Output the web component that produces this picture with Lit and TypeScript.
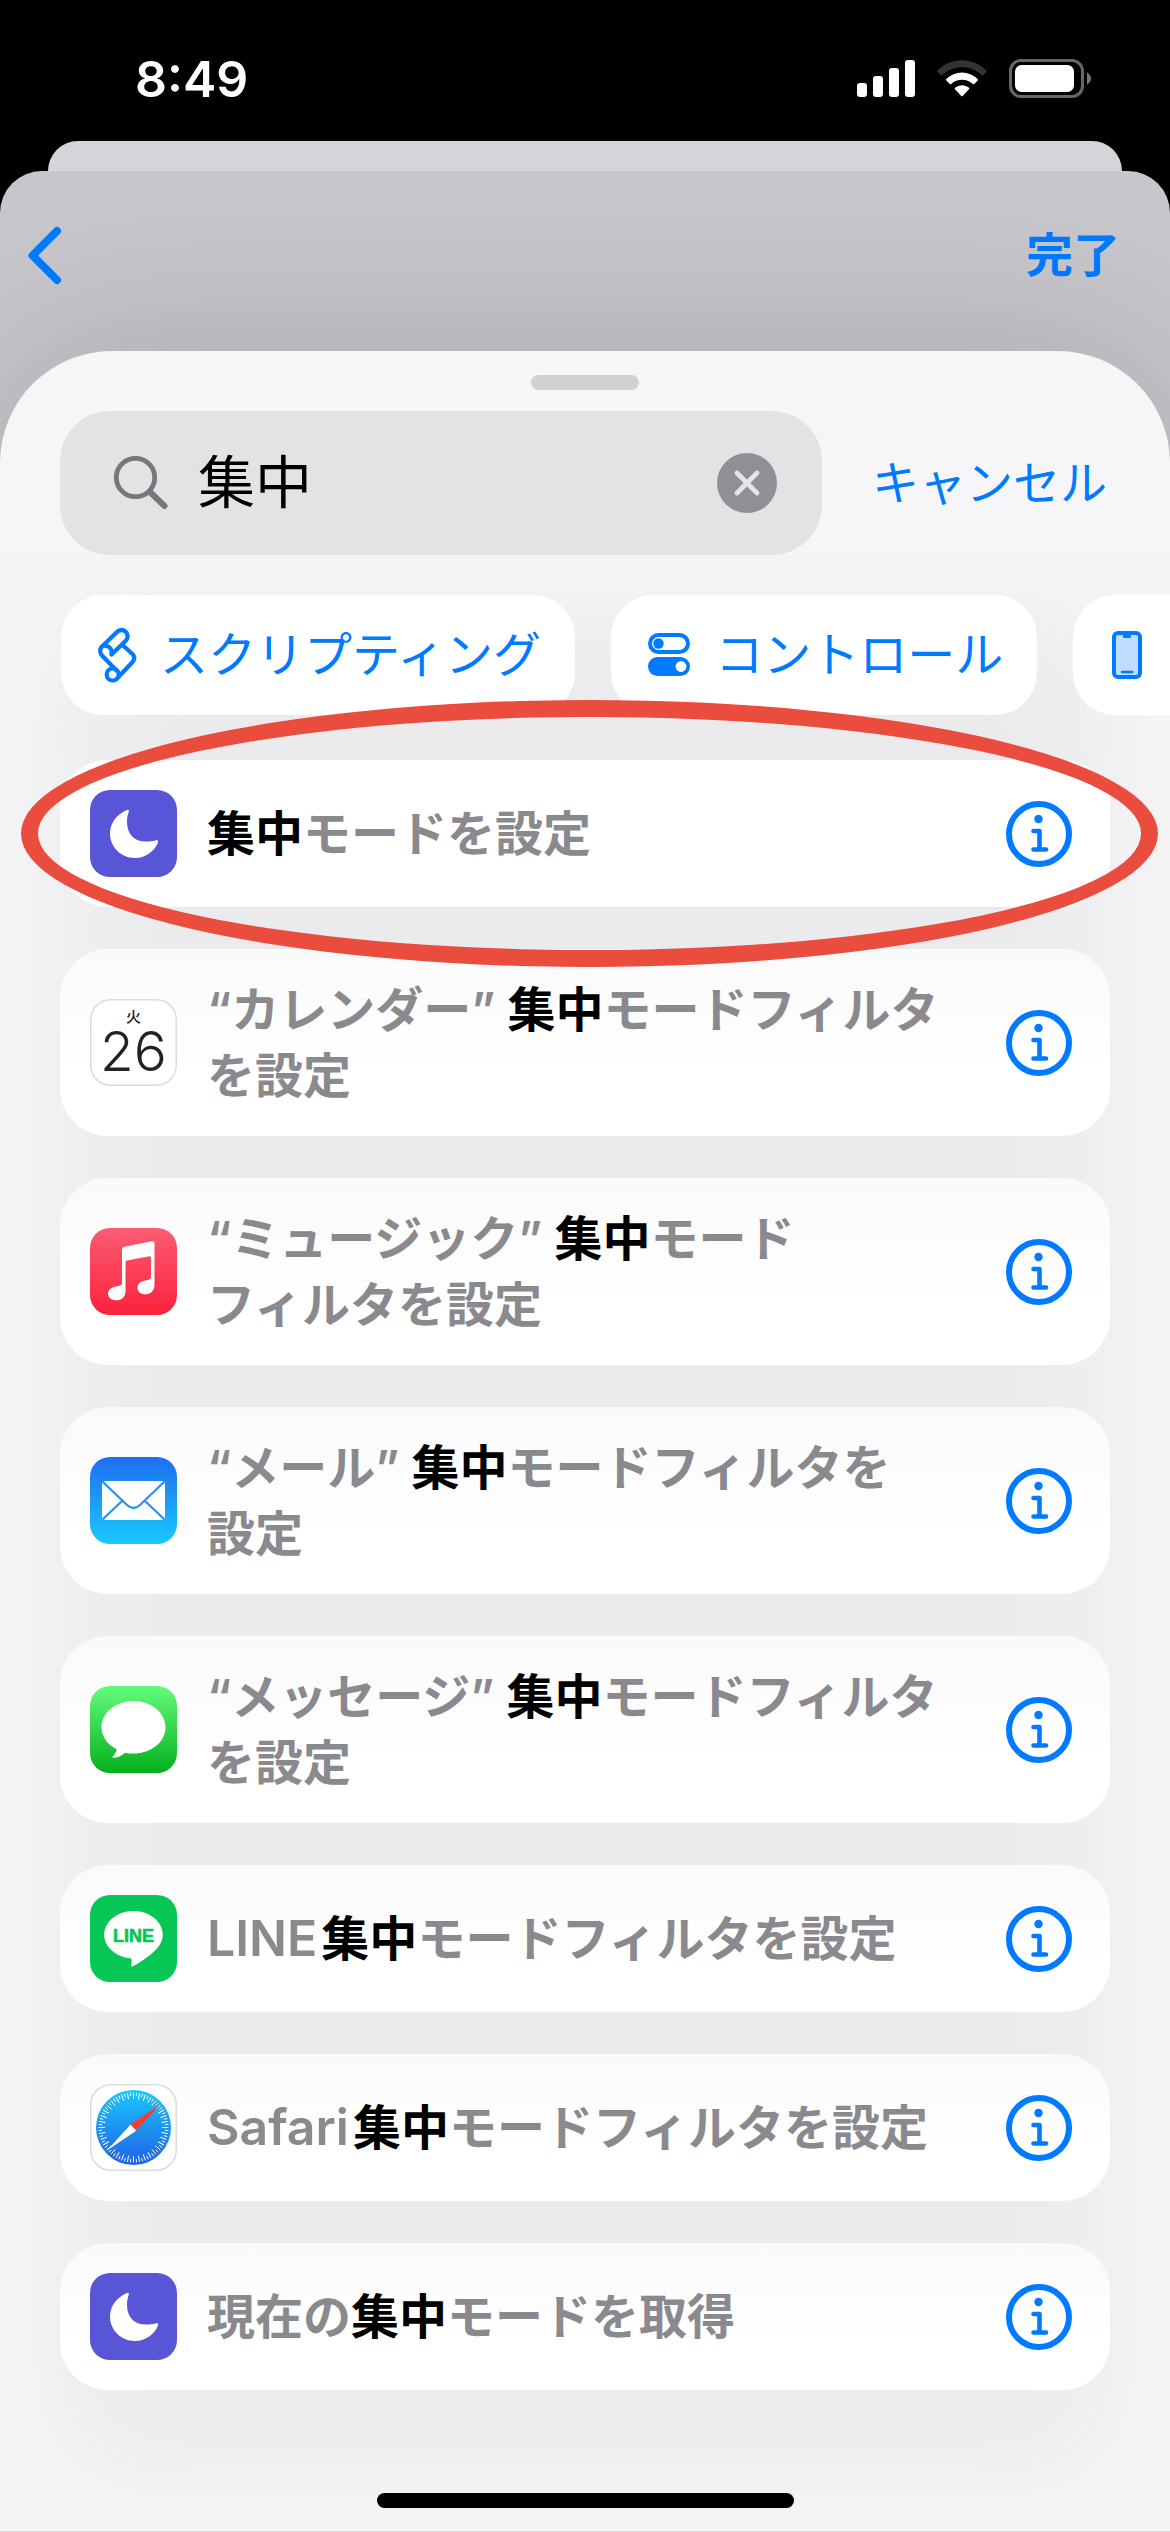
import { LitElement, html, svg, css } from "lit";
import { customElement, property } from "lit/decorators.js";

type Segment = { text: string; kind?: "match" | "latin" | "break" };
type Action = { app: string; segments: Segment[]; circled?: boolean };

const m = (text: string): Segment => ({ text, kind: "match" });
const l = (text: string): Segment => ({ text, kind: "latin" });
const t = (text: string): Segment => ({ text });
const br: Segment = { text: "", kind: "break" };

const ACTIONS: Action[] = [
  { app: "focus", segments: [m("集中"), t("モードを設定")], circled: true },
  { app: "calendar", segments: [t("“カレンダー” "), m("集中"), t("モードフィルタ"), br, t("を設定")] },
  { app: "music", segments: [t("“ミュージック” "), m("集中"), t("モード"), br, t("フィルタを設定")] },
  { app: "mail", segments: [t("“メール” "), m("集中"), t("モードフィルタを"), br, t("設定")] },
  { app: "messages", segments: [t("“メッセージ” "), m("集中"), t("モードフィルタ"), br, t("を設定")] },
  { app: "line", segments: [l("LINE"), m("集中"), t("モードフィルタを設定")] },
  { app: "safari", segments: [l("Safari"), m("集中"), t("モードフィルタを設定")] },
  { app: "focus", segments: [t("現在の"), m("集中"), t("モードを取得")] },
];

const CHIPS = [
  { icon: "script", label: "スクリプティング" },
  { icon: "controls", label: "コントロール" },
  { icon: "device", label: "デバイス" },
];

const FONT = css`"Inter", "Noto Sans CJK JP", sans-serif`;

/* Rounded app tile with the artwork of one app. */
@customElement("app-icon")
class AppIcon extends LitElement {
  @property() name = "";

  static styles = css`
    :host { display: block; flex: none; width: 87px; height: 87px; }
    svg { display: block; width: 100%; height: 100%; }
    .line-word { font: 700 18px "Liberation Sans", sans-serif; fill: #06c755; stroke: #06c755; }
    .weekday { font: 500 15px "Noto Sans CJK JP", sans-serif; fill: #222; }
    .day { font: 300 55px ${FONT}; fill: #222; }
  `;

  private art() {
    switch (this.name) {
      case "focus":
        return svg`<rect width="87" height="87" rx="20" fill="#5856d6"/>
          <path fill="#fff" d="M37 20C27 24 20 33 20 43.500C20 57 31 68 45 68C55 68 64 62 68 52.500C68.600 50.800 67.500 49.600 66 50.200C63 51.200 60 51.600 56 51.600C44 51.600 37 44 37 32C37 28 37.500 25 38.700 22C39.300 20.400 38.500 19.400 37 20Z"/>`;
      case "calendar":
        return svg`<rect x=".75" y=".75" width="85.500" height="85.500" rx="20" fill="#fff" stroke="#dcdcde" stroke-width="1.500"/>
          <text class="weekday" x="43.500" y="23" text-anchor="middle">火</text>
          <text class="day" x="43.500" y="72" text-anchor="middle">26</text>`;
      case "music":
        return svg`<defs><linearGradient id="g" x2="0" y2="1"><stop stop-color="#fb5c74"/><stop offset="1" stop-color="#fa233b"/></linearGradient></defs>
          <rect width="87" height="87" rx="20" fill="url(#g)"/>
          <path fill="#fff" d="M32 21.500Q32 19.200 34.300 18.700L62 13.200Q64.500 12.800 64.500 15.200V57C64.500 63 60 66.300 55 66.300C50.500 66.300 47.500 63.500 47.500 60C47.500 56 50.500 53.500 55 52.500L58.500 51.800Q61 51.300 61 48.500V29.800Q61 28 59.300 28.300L37 32.500Q35.500 32.800 35.500 34.300V63C35.500 69 31.500 72.300 26.300 72.300C21.500 72.300 18 69.500 18 66C18 62 21 59.500 25.500 58.500L29 57.800Q32 57.200 32 54.500Z"/>`;
      case "mail":
        return svg`<defs><linearGradient id="g" x2="0" y2="1"><stop stop-color="#1e6ef0"/><stop offset="1" stop-color="#1ac8fc"/></linearGradient></defs>
          <rect width="87" height="87" rx="20" fill="url(#g)"/>
          <rect x="12" y="24" width="63" height="39" rx="4" fill="#fff"/>
          <path d="M13 25L37 48Q43.500 54 50 48L74 25M13 62L32 44M74 62L55 44" fill="none" stroke="#2292f6" stroke-width="2.200"/>`;
      case "messages":
        return svg`<defs><linearGradient id="g" x2="0" y2="1"><stop stop-color="#64fb7c"/><stop offset="1" stop-color="#04b01c"/></linearGradient></defs>
          <rect width="87" height="87" rx="20" fill="url(#g)"/>
          <path fill="#fff" d="M43.500 15C61.500 15 75.500 26.800 75.500 41.300S61.500 67.600 43.500 67.600C40.500 67.600 37.800 67.300 35 66.700C32 69.600 27.500 71.800 23.200 71.800C22.300 71.800 22.200 70.900 22.800 70.300C25 68.300 26.300 66 26.600 63.300C17.500 58.600 11.500 50.600 11.500 41.300C11.500 26.800 25.500 15 43.500 15Z"/>`;
      case "line":
        return svg`<rect width="87" height="87" rx="20" fill="#06c755"/>
          <path fill="#fff" d="M43.500 16C59.700 16 72.800 26.600 72.800 39.700C72.800 45 70.600 49.700 66.300 54.200C60 61 47.600 69.300 42.800 71.300C40.800 72 41 70.500 41.200 69.500C41.600 67 42.500 63.600 40 63.200C25.500 61.600 14.200 51.600 14.200 39.700C14.200 26.600 27.300 16 43.500 16Z"/>
          <text class="line-word" x="43.500" y="47" text-anchor="middle" stroke-width=".6">LINE</text>`;
      default: {
        const ticks = Array.from({ length: 72 }, (_, i) => i);
        return svg`<defs><linearGradient id="g" x2="0" y2="1"><stop stop-color="#19c8fa"/><stop offset="1" stop-color="#1e62e6"/></linearGradient></defs>
          <rect x=".75" y=".75" width="85.500" height="85.500" rx="20" fill="#fff" stroke="#dcdcde" stroke-width="1.500"/>
          <circle cx="43.500" cy="43.500" r="37.500" fill="url(#g)"/>
          ${ticks.map((i) => svg`<path d="M43.500 8.500v${i % 2 ? 3.5 : 6.5}" stroke="#fff" stroke-width=".9" transform="rotate(${i * 5} 43.500 43.500)"/>`)}
          <path fill="#fff" d="M17 66.500L40.500 40.500L46.500 46.500Z"/>
          <path fill="#fb3b30" d="M70 20.500L40.500 40.500L46.500 46.500Z"/>`;
      }
    }
  }

  render() {
    return html`<svg viewBox="0 0 87 87" aria-hidden="true">${this.art()}</svg>`;
  }
}

/* One search result: app tile, title with the match in black, info button. */
@customElement("action-row")
class ActionRow extends LitElement {
  @property({ attribute: false }) action!: Action;

  static styles = css`
    :host { display: block; position: relative; }
    .card {
      display: flex; align-items: center; gap: 30px; box-sizing: border-box;
      min-height: 147px; padding: 28px 38px 27px 30px; border-radius: 48px;
      background: linear-gradient(#fafafa, #fff 70%);
    }
    .card.circled { background: #fff; }
    .title { flex: 1; margin: 0; font: 600 48px/66px ${FONT}; color: #8a8a8e; white-space: nowrap; }
    .match { font-weight: inherit; background: none; color: #000; }
    .latin { font-size: 50px; line-height: 1; margin-right: 4px; }
    .info { flex: none; padding: 0; border: 0; background: none; display: block; }
    .info svg { display: block; width: 66px; height: 66px; }
    .ring {
      position: absolute; z-index: 1; top: -60px; bottom: -60px; left: -39px; right: -48px;
      border: 17px solid #ea4c3e; border-radius: 50%; pointer-events: none;
    }
    .tile { margin: -28px 0 -27px; }
  `;

  private segment(s: Segment) {
    switch (s.kind) {
      case "break": return html`<br />`;
      case "match": return html`<mark class="match">${s.text}</mark>`;
      case "latin": return html`<span class="latin">${s.text}</span>`;
      default: return s.text;
    }
  }

  render() {
    const { app, segments, circled } = this.action;
    return html`
      <div class="card ${circled ? "circled" : ""}">
        <app-icon class="tile" name=${app}></app-icon>
        <p class="title">${segments.map((s) => this.segment(s))}</p>
        <button class="info" aria-label="情報">
          <svg viewBox="0 0 66 66" fill="none" stroke="#007aff" stroke-linecap="round" stroke-linejoin="round">
            <circle cx="33" cy="33" r="30" stroke-width="6"/>
            <circle cx="32.500" cy="18" r="4.200" fill="#007aff" stroke="none"/>
            <path d="M27.500 30H33.500V48.500M27.500 48.500H40" stroke-width="4.600"/>
          </svg>
        </button>
      </div>
      ${circled ? html`<div class="ring"></div>` : ""}`;
  }
}

@customElement("app-root")
class AppRoot extends LitElement {
  static styles = css`
    :host { display: block; }
    button { font: inherit; color: inherit; border: 0; padding: 0; background: none; }
    svg { display: block; flex: none; }
    .screen {
      display: flex; flex-direction: column; min-height: 100vh; box-sizing: border-box;
      background: #000; font: 400 48px/60px ${FONT}; color: #007aff; overflow: hidden;
    }
    .status {
      display: flex; align-items: center; justify-content: space-between; box-sizing: border-box;
      height: 141px; padding: 16px 78px 0 135px;
    }
    .time { font-size: 50px; font-weight: 600; color: #fff; }
    .indicators { display: flex; align-items: center; gap: 22px; }
    .back-sheet { height: 30px; margin: 0 48px; border-radius: 32px 32px 0 0; background: #d5d4d9; }
    .nav-sheet {
      flex: 1; display: flex; flex-direction: column; overflow: hidden;
      border-radius: 42px 42px 0 0; background: #c7c6cb;
    }
    .nav {
      display: flex; align-items: center; justify-content: space-between; box-sizing: border-box;
      height: 180px; padding: 0 50px 12px 25px;
    }
    .done, .cancel { font-size: 47px; }
    .done { font-weight: 600; }
    .sheet {
      flex: 1; display: flex; flex-direction: column; box-sizing: border-box; padding-top: 24px;
      border-radius: 112px 112px 0 0; border-bottom: 1px solid #d8d8da;
      background: #f6f6f8; box-shadow: 0 0 170px rgba(0, 0, 0, 0.16);
    }
    .grabber { flex: none; width: 108px; height: 15px; margin: 0 auto 21px; border-radius: 8px; background: #d0d1d3; }
    .search-bar { display: flex; align-items: center; gap: 50px; padding: 0 63px 0 60px; }
    .field {
      flex: 1; min-width: 0; display: flex; align-items: center; box-sizing: border-box;
      height: 144px; padding: 0 45px 0 54px; gap: 30px; border-radius: 50px; background: #e2e3e5;
    }
    .input {
      flex: 1; min-width: 0; padding: 0; border: 0; outline: 0; background: none;
      font: 400 57px/80px ${FONT}; color: #000;
    }
    .body {
      flex: 1; display: flex; flex-direction: column; overflow: hidden;
      background: #ebebed; box-shadow: inset 0 0 120px 60px #f6f6f8;
    }
    .chips { display: flex; gap: 36px; padding: 40px 0 45px 61px; }
    .chip {
      flex: none; display: flex; align-items: center; gap: 20px; height: 120px; padding: 0 34px;
      border-radius: 42px; background: #fff; white-space: nowrap;
    }
    .results { display: flex; flex-direction: column; gap: 42px; margin: 0; padding: 0 60px; list-style: none; }
    .home { flex: none; width: 417px; height: 15px; margin: auto auto 23px; border-radius: 8px; background: #000; }
  `;

  private chipIcon(name: string) {
    if (name === "script")
      return html`<svg width="45" height="70" viewBox="4 0 45 70" fill="none" stroke="#007aff" stroke-width="4.200" stroke-linecap="round" stroke-linejoin="round" aria-hidden="true">
        <path d="M10.500 27L26.500 11.500Q30.500 8.500 34.500 11.500Q38.500 16 35 20.500L20.500 34.500V30.500Q19 26 14.500 26"/>
        <path d="M10.500 27Q7.500 31.500 11 35.500L26 51"/>
        <path d="M32 25.500L42 34.500Q44.500 38 42 41.500L26 58.500"/>
        <circle cx="21.700" cy="54.500" r="6"/>
      </svg>`;
    if (name === "controls")
      return html`<svg width="50" height="50" viewBox="0 0 50 50" aria-hidden="true">
        <rect x="5" y="5" width="38" height="17" rx="8.500" fill="none" stroke="#007aff" stroke-width="4"/>
        <circle cx="13.500" cy="13.500" r="5.200" fill="#007aff"/>
        <rect x="3" y="27" width="42" height="19" rx="9.500" fill="#007aff"/>
        <circle cx="36" cy="36.500" r="5.400" fill="#fff"/>
      </svg>`;
    return html`<svg width="40" height="50" viewBox="0 0 40 50" aria-hidden="true">
      <rect x="7" y="3" width="26" height="44" rx="4" fill="#bfdeff" stroke="#007aff" stroke-width="4"/>
      <path d="M16 4H24V6.500Q24 8 22.500 8H17.500Q16 8 16 6.500Z" fill="#007aff"/>
      <path d="M15 42H25" stroke="#007aff" stroke-width="2.500" stroke-linecap="round"/>
    </svg>`;
  }

  render() {
    return html`
      <main class="screen">
        <header class="status">
          <span class="time">8:49</span>
          <div class="indicators">
            <svg width="58" height="37" viewBox="0 0 58 37" fill="#fff" aria-hidden="true">
              <rect y="23" width="10" height="14" rx="3"/><rect x="16" y="16" width="10" height="21" rx="3"/>
              <rect x="32" y="8" width="10" height="29" rx="3"/><rect x="48" width="10" height="37" rx="3"/>
            </svg>
            <svg width="50" height="37" viewBox="0 0 50 37" fill="#fff" aria-hidden="true">
              <path opacity=".2" d="M.6 10.500C14-3.300 36-3.300 49.400 10.500Q50 11.200 49.400 11.900L46 15.200Q45.300 15.800 44.600 15.200C33.500 4.600 16.500 4.600 5.400 15.200Q4.700 15.800 4 15.200L.6 11.900Q0 11.200 .6 10.500Z"/>
              <path d="M9.300 19C18 10.300 32 10.300 40.700 19Q41.300 19.700 40.700 20.400L37.200 24Q36.500 24.600 35.800 24C29.500 18.400 20.500 18.400 14.200 24Q13.500 24.600 12.800 24L9.300 20.400Q8.700 19.700 9.300 19Z"/>
              <path d="M18 27.800C22 24.400 28 24.400 32 27.800Q32.800 28.500 32 29.300L25.700 36Q25 36.700 24.300 36L18 29.300Q17.200 28.500 18 27.800Z"/>
            </svg>
            <svg width="83" height="39" viewBox="0 0 83 39" aria-hidden="true">
              <rect x="1.500" y="1.500" width="72" height="36" rx="10.500" fill="none" stroke="#666" stroke-width="3"/>
              <rect x="6" y="6" width="59" height="27" rx="6.500" fill="#fff"/>
              <path d="M78 13.500Q82 16 82 19.500T78 25.500Z" fill="#777"/>
            </svg>
          </div>
        </header>
        <div class="back-sheet"></div>
        <section class="nav-sheet">
          <nav class="nav">
            <button aria-label="戻る">
              <svg width="40" height="60" viewBox="0 0 40 60" fill="none" stroke="#007aff" stroke-width="8" stroke-linecap="round" stroke-linejoin="round">
                <path d="M32 6L7.500 30.500L32 55"/>
              </svg>
            </button>
            <button class="done">完了</button>
          </nav>
          <section class="sheet">
            <div class="grabber"></div>
            <form class="search-bar" role="search">
              <div class="field">
                <svg width="54" height="54" viewBox="0 0 54 54" fill="none" stroke="#76767b" stroke-linecap="round" aria-hidden="true">
                  <circle cx="21.500" cy="21.500" r="19.200" stroke-width="4.800"/>
                  <path d="M36 36L50.500 50" stroke-width="6"/>
                </svg>
                <input class="input" type="text" aria-label="検索" .value=${"集中"} />
                <button type="button" aria-label="消去">
                  <svg width="60" height="60" viewBox="0 0 60 60">
                    <circle cx="30" cy="30" r="30" fill="#8f9095"/>
                    <path d="M20 20L40 40M40 20L20 40" stroke="#e4e5e7" stroke-width="4.800" stroke-linecap="round"/>
                  </svg>
                </button>
              </div>
              <button class="cancel" type="button">キャンセル</button>
            </form>
            <div class="body">
              <div class="chips">
                ${CHIPS.map((c) => html`<button class="chip">${this.chipIcon(c.icon)}<span>${c.label}</span></button>`)}
              </div>
              <ul class="results">
                ${ACTIONS.map((a) => html`<li><action-row .action=${a}></action-row></li>`)}
              </ul>
              <div class="home"></div>
            </div>
          </section>
        </section>
      </main>`;
  }
}
